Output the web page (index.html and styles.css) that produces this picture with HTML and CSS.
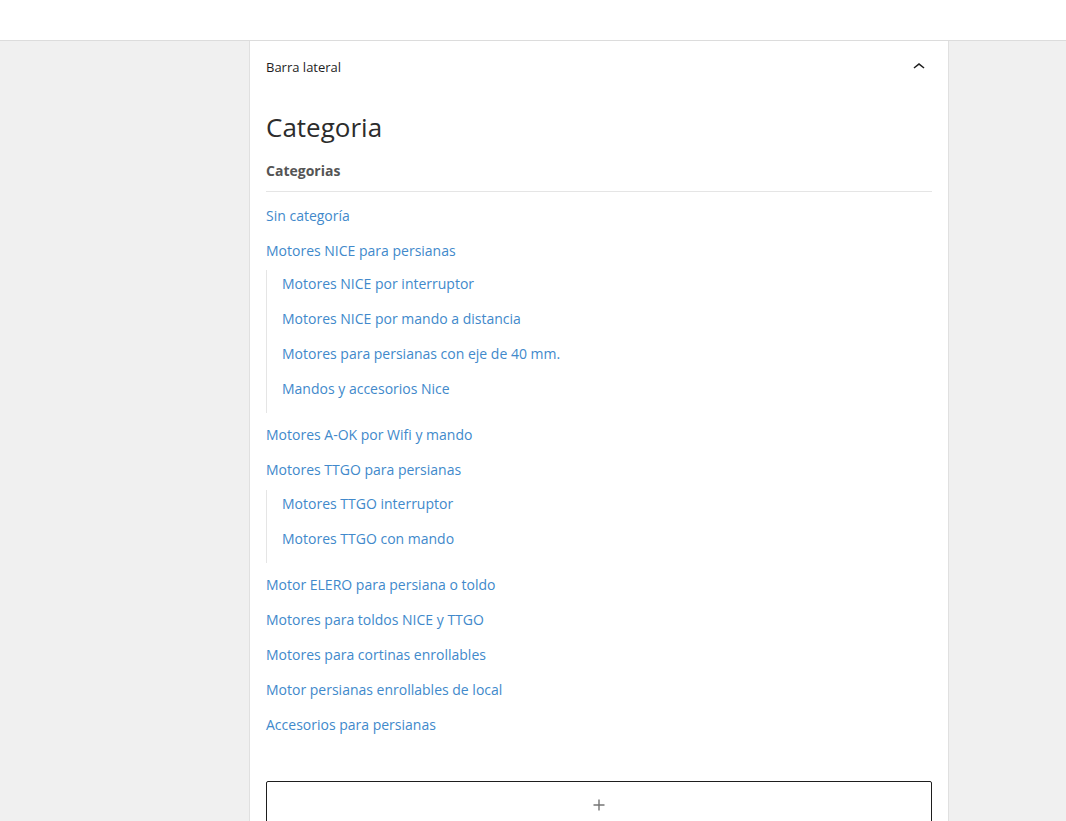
FILE: index.html
```html
<!DOCTYPE html>
<html>
<head>
<meta charset="UTF-8">
<title>Barra lateral</title>
<link rel="stylesheet" href="styles.css">
</head>
<body>
<div class="topbar"></div>
<div class="canvas">
<div class="panel">
<div class="panel-head">
<span>Barra lateral</span>
<svg class="chevron" width="24" height="24" viewBox="0 0 24 24"><path d="M6.5 12.4 12 8l5.5 4.4-.9 1.2L12 9.9l-4.6 3.7z" fill="#1e1e1e"/></svg>
</div>
<div class="panel-body">
<h2 class="title">Categoria</h2>
<h3 class="subtitle">Categorias</h3>
<ul class="cats">
<li><a href="#">Sin categoría</a></li>
<li class="parent"><a href="#">Motores NICE para persianas</a>
<ul class="children">
<li><a href="#">Motores NICE por interruptor</a></li>
<li><a href="#">Motores NICE por mando a distancia</a></li>
<li><a href="#">Motores para persianas con eje de 40 mm.</a></li>
<li><a href="#">Mandos y accesorios Nice</a></li>
</ul>
</li>
<li><a href="#">Motores A-OK por Wifi y mando</a></li>
<li class="parent"><a href="#">Motores TTGO para persianas</a>
<ul class="children">
<li><a href="#">Motores TTGO interruptor</a></li>
<li><a href="#">Motores TTGO con mando</a></li>
</ul>
</li>
<li><a href="#">Motor ELERO para persiana o toldo</a></li>
<li><a href="#">Motores para toldos NICE y TTGO</a></li>
<li><a href="#">Motores para cortinas enrollables</a></li>
<li><a href="#">Motor persianas enrollables de local</a></li>
<li><a href="#">Accesorios para persianas</a></li>
</ul>
<div class="add">
<svg width="24" height="24" viewBox="0 0 24 24"><path d="M11.3 6.5h1.4v4.8h4.8v1.4h-4.8v4.8h-1.4v-4.8H6.5v-1.4h4.8z" fill="#757575"/></svg>
</div>
</div>
</div>
</div>
</body>
</html>
```
FILE: styles.css
```css
html,body{
margin:0;
padding:0;
}
body{
background:#f0f0f0;
font-family:"Open Sans","Noto Sans",sans-serif;
color:#1e1e1e;
}
.topbar{
height:40px;
background:#fff;
border-bottom:1px solid #dcdcdc;
}
.canvas{
padding-left:249px;
}
.panel{
width:698px;
min-height:800px;
background:#fff;
border-left:1px solid #e0e0e0;
border-right:1px solid #e0e0e0;
}
.panel-head{
height:52px;
padding:0 16px;
display:flex;
align-items:center;
justify-content:space-between;
font-size:13px;
}
.chevron{
margin-right:1px;
}
.panel-body{
padding:0 16px;
}
.title{
margin:17px 0 0;
font-size:26px;
font-weight:400;
line-height:34px;
color:#2c2c2c;
}
.subtitle{
margin:16px 0 0;
font-size:14px;
font-weight:700;
line-height:21px;
color:#555;
padding-bottom:10px;
border-bottom:1px solid #e5e5e5;
}
.cats{
list-style:none;
margin:13px 0 0;
padding:0;
font-size:14px;
line-height:21px;
}
.cats li{
margin-bottom:14px;
}
.cats li.parent{
margin-bottom:11px;
}
.cats li.parent + li + li.parent .children{
margin-top:10px;
}
.cats a{
color:#4189cb;
text-decoration:none;
}
.children{
display:flow-root;
list-style:none;
margin:9px 0 0;
padding:3px 0 0 15px;
border-left:1px solid #e5e5e5;
}
.add{
margin-top:46px;
height:46px;
border:1px solid #1e1e1e;
border-radius:2px;
display:flex;
align-items:center;
justify-content:center;
}
```
